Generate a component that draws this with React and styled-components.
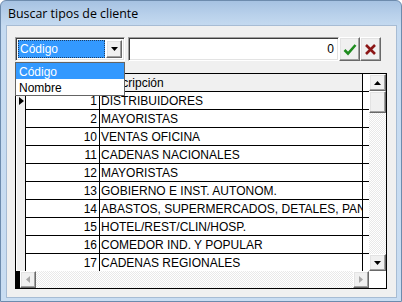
import React from "react";
import styled, { createGlobalStyle } from "styled-components";

const GlobalStyle = createGlobalStyle`
  html, body {
    margin: 0;
    padding: 0;
    background: #ffffff;
  }
  body {
    font-family: "Liberation Sans", Arial, sans-serif;
    font-size: 12px;
  }
`;

const rows = [
  { code: 1, name: "DISTRIBUIDORES", current: true },
  { code: 2, name: "MAYORISTAS" },
  { code: 10, name: "VENTAS OFICINA" },
  { code: 11, name: "CADENAS NACIONALES" },
  { code: 12, name: "MAYORISTAS" },
  { code: 13, name: "GOBIERNO E INST. AUTONOM." },
  { code: 14, name: "ABASTOS, SUPERMERCADOS, DETALES, PANADERIAS" },
  { code: 15, name: "HOTEL/REST/CLIN/HOSP." },
  { code: 16, name: "COMEDOR IND. Y POPULAR" },
  { code: 17, name: "CADENAS REGIONALES" },
];

const CheckIcon = () => (
  <svg width="14" height="13" viewBox="0 0 14 13">
    <path d="M1.5 7 L5 10.5 L12.5 2" fill="none" stroke="#1f8c1f" strokeWidth="2.6" />
  </svg>
);

const CrossIcon = () => (
  <svg width="13" height="13" viewBox="0 0 13 13">
    <path d="M2 2 L11 11 M11 2 L2 11" fill="none" stroke="#8c1616" strokeWidth="2.6" />
  </svg>
);

const Arrow = ({ dir, color = "#000" }) => {
  const paths = {
    up: "M0 4 L3.5 0 L7 4 Z",
    down: "M0 0 L7 0 L3.5 4 Z",
    left: "M4 0 L4 7 L0 3.5 Z",
    right: "M0 0 L4 3.5 L0 7 Z",
  };
  const vertical = dir === "up" || dir === "down";
  return (
    <svg width={vertical ? 7 : 4} height={vertical ? 4 : 7} viewBox={vertical ? "0 0 7 4" : "0 0 4 7"}>
      <path d={paths[dir]} fill={color} />
    </svg>
  );
};

const App = () => {
  return (
    <>
      <GlobalStyle />
      <Window>
        <TitleBar>Buscar tipos de cliente</TitleBar>
        <Frame>
          <Client>
            <Toolbar>
              <Combo>
                <ComboValue>Código</ComboValue>
                <DropButton>
                  <Arrow dir="down" />
                </DropButton>
              </Combo>
              <TextBox>0</TextBox>
              <ToolButton>
                <CheckIcon />
              </ToolButton>
              <ToolButton>
                <CrossIcon />
              </ToolButton>
            </Toolbar>

            <Grid>
              <TableArea>
                <Row header>
                  <Indicator />
                  <Cell code header />
                  <Cell header>Descripción</Cell>
                  <Filler />
                </Row>
                {rows.map((r) => (
                  <Row key={r.code}>
                    <Indicator>{r.current && <Pointer />}</Indicator>
                    <Cell code>{r.code}</Cell>
                    <Cell>{r.name}</Cell>
                    <Filler />
                  </Row>
                ))}
              </TableArea>

              <VScroll>
                <ScrollButton>
                  <Arrow dir="up" />
                </ScrollButton>
                <Thumb />
                <Track />
                <ScrollButton>
                  <Arrow dir="down" />
                </ScrollButton>
              </VScroll>

              <HScroll>
                <HEdge />
                <ScrollButton side>
                  <Arrow dir="left" color="#a8a8a8" />
                </ScrollButton>
                <Track />
                <ScrollButton side>
                  <Arrow dir="right" color="#a8a8a8" />
                </ScrollButton>
              </HScroll>

              <Corner />
            </Grid>

            <DropList>
              <DropItem selected>Código</DropItem>
              <DropItem>Nombre</DropItem>
            </DropList>
          </Client>
        </Frame>
      </Window>
    </>
  );
};

export default App;

const Window = styled.div`
  width: 402px;
  height: 302px;
  box-sizing: border-box;
  border: 1px solid #6d8bad;
  border-radius: 6px 6px 0 0;
  background: linear-gradient(180deg, #a6c2e2 0px, #b9d1eb 14px, #c6dbf1 26px, #c9ddf2 100%);
  display: flex;
  flex-direction: column;
  overflow: hidden;
`;

const TitleBar = styled.div`
  height: 25px;
  display: flex;
  align-items: center;
  padding-left: 7px;
  font-family: "Open Sans", "Noto Sans", sans-serif;
  font-size: 12.4px;
  color: #000000;
`;

const Frame = styled.div`
  flex: 1;
  display: flex;
  padding: 0 5px 4px 6px;
`;

const Client = styled.div`
  position: relative;
  flex: 1;
  background: #f0f0f0;
  padding: 11px 0 0 8px;
  box-shadow: 0 0 0 1px #a7bcd4;
`;

const Toolbar = styled.div`
  display: flex;
  align-items: stretch;
  height: 24px;
`;

const sunken = `
  box-sizing: border-box;
  border: 1px solid;
  border-color: #a0a0a0 #ffffff #ffffff #a0a0a0;
  box-shadow: inset 1px 1px 0 #3c3c3c, inset -1px -1px 0 #e3e3e3;
  background: #ffffff;
`;

const raised = `
  box-sizing: border-box;
  background: #f0f0f0;
  border: 1px solid;
  border-color: #ffffff #696969 #696969 #ffffff;
  box-shadow: inset -1px -1px 0 #a0a0a0, inset 1px 1px 0 #e3e3e3;
`;

const Combo = styled.div`
  ${sunken}
  width: 110px;
  display: flex;
  align-items: stretch;
  padding: 2px;
`;

const ComboValue = styled.div`
  flex: 1;
  background: #3399ff;
  color: #ffffff;
  outline: 1px dotted #1c3f66;
  outline-offset: -1px;
  display: flex;
  align-items: center;
  padding-left: 2px;
  margin-right: 1px;
`;

const DropButton = styled.div`
  ${raised}
  width: 16px;
  display: flex;
  align-items: center;
  justify-content: center;
`;

const TextBox = styled.div`
  ${sunken}
  width: 211px;
  margin-left: 3px;
  display: flex;
  align-items: center;
  justify-content: flex-end;
  padding-right: 4px;
  color: #000000;
`;

const ToolButton = styled.div`
  ${raised}
  width: 21px;
  display: flex;
  align-items: center;
  justify-content: center;
  &:first-of-type {
    margin-left: 4px;
  }
`;

const Grid = styled.div`
  margin-top: 12px;
  width: 372px;
  height: 216px;
  box-sizing: border-box;
  border: 1px solid #000000;
  background: #ffffff;
  display: grid;
  grid-template-columns: 353px 17px;
  grid-template-rows: 197px 17px;
`;

const TableArea = styled.div`
  overflow: hidden;
  background: #ffffff;
`;

const Row = styled.div`
  display: flex;
  height: 18px;
  flex: none;
  background: ${(p) => (p.header ? "#f0f0f0" : "#ffffff")};
`;

const Indicator = styled.div`
  width: 9px;
  flex: none;
  background: #f0f0f0;
  border-right: 1px solid #000000;
  box-shadow: inset 1px 0 0 #ffffff;
  display: flex;
  align-items: center;
  justify-content: center;
`;

const Pointer = styled.div`
  width: 0;
  height: 0;
  border-left: 5px solid #000000;
  border-top: 4px solid transparent;
  border-bottom: 4px solid transparent;
  margin-left: 1px;
`;

const Cell = styled.div`
  box-sizing: border-box;
  flex: none;
  height: 18px;
  width: ${(p) => (p.code ? "74px" : "263px")};
  border-right: 1px solid #000000;
  border-bottom: 1px solid #000000;
  line-height: 17px;
  white-space: nowrap;
  overflow: hidden;
  text-align: ${(p) => (p.code ? "right" : "left")};
  padding: ${(p) => (p.code ? "1px 2px 0 0" : "1px 0 0 1px")};
  background: ${(p) => (p.header ? "#f0f0f0" : "#ffffff")};
  color: #000000;
`;

const Filler = styled.div`
  flex: 1;
  border-bottom: 1px solid #000000;
  background: #ffffff;
`;

const VScroll = styled.div`
  display: flex;
  flex-direction: column;
`;

const HScroll = styled.div`
  display: flex;
`;

const HEdge = styled.div`
  width: 4px;
  background: #000000;
`;

const ScrollButton = styled.div`
  ${raised}
  flex: none;
  width: ${(p) => (p.side ? "16px" : "17px")};
  height: 17px;
  display: flex;
  align-items: center;
  justify-content: center;
`;

const Thumb = styled.div`
  ${raised}
  height: 22px;
  flex: none;
`;

const Track = styled.div`
  flex: 1;
  background-color: #ffffff;
  background-image: repeating-conic-gradient(#e9e9e9 0 25%, #ffffff 0 50%);
  background-size: 2px 2px;
`;

const Corner = styled.div`
  background: #ffffff;
`;

const DropList = styled.div`
  position: absolute;
  left: 8px;
  top: 36px;
  width: 110px;
  box-sizing: border-box;
  border: 1px solid #646464;
  background: #ffffff;
`;

const DropItem = styled.div`
  height: 16px;
  box-sizing: border-box;
  padding: 1px 0 0 3px;
  line-height: 16px;
  overflow: hidden;
  background: ${(p) => (p.selected ? "#3399ff" : "#ffffff")};
  color: ${(p) => (p.selected ? "#ffffff" : "#000000")};
`;
